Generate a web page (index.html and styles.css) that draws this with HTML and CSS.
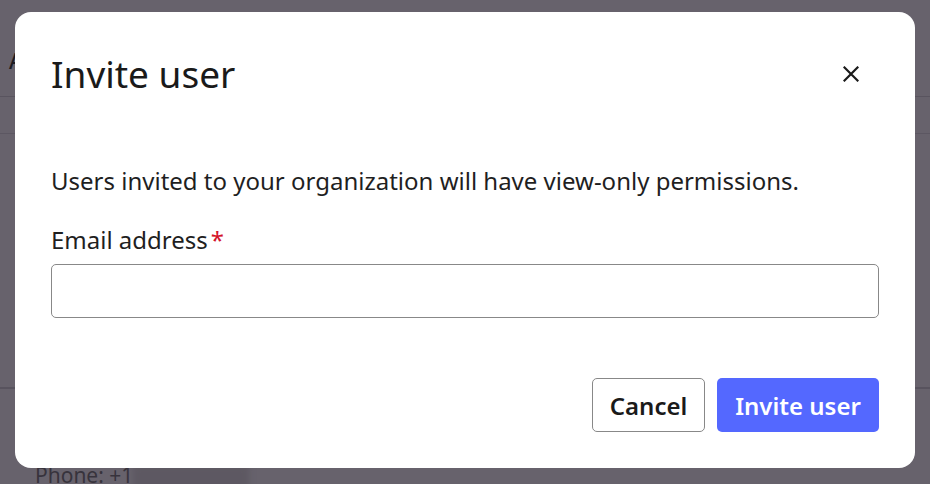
FILE: index.html
```html
<!DOCTYPE html>
<html lang="en">
<head>
<meta charset="utf-8">
<title>Invite user</title>
<link rel="stylesheet" href="styles.css">
</head>
<body>
<div class="page">
  <header class="page-header"><span class="page-title">Account</span></header>
  <nav class="page-tabs"></nav>
  <section class="page-content">
    <div class="page-card"></div>
    <div class="page-info">
      <span class="phone">Phone: +1</span><span class="phone-blur"></span>
    </div>
  </section>
</div>

<div class="modal" role="dialog" aria-labelledby="modal-title">
  <div class="modal-header">
    <h2 id="modal-title" class="modal-title">Invite user</h2>
    <button class="close-btn" aria-label="Close">
      <svg width="16" height="16" viewBox="0 0 16 16" aria-hidden="true"><path d="M1.5 1.5 L14.5 14.5 M14.5 1.5 L1.5 14.5" stroke="#1a1a1a" stroke-width="2.2" stroke-linecap="square" fill="none"/></svg>
    </button>
  </div>
  <p class="modal-text">Users invited to your organization will have view-only permissions.</p>
  <label class="field-label" for="email">Email address<span class="req">*</span></label>
  <input id="email" class="field-input" type="email">
  <div class="modal-actions">
    <button class="btn btn-secondary">Cancel</button>
    <button class="btn btn-primary">Invite user</button>
  </div>
</div>
</body>
</html>
```
FILE: styles.css
```css
* { box-sizing: border-box; }
html, body { margin: 0; padding: 0; }
body {
  width: 930px;
  height: 484px;
  overflow: hidden;
  background: #67626c;
  font-family: "Noto Sans", "Open Sans", sans-serif;
  position: relative;
}
.page { height: 484px; overflow: hidden; display: flex; flex-direction: column; }
.page > * { flex-shrink: 0; }
.page-header {
  height: 97px;
  border-bottom: 1px solid #59545f;
  padding: 47px 0 0 9px;
}
.page-title { font-size: 21px; color: #1c1a20; font-weight: 500; }
.page-tabs { height: 37px; border-bottom: 1px solid #5c5762; }
.page-content { display: flex; flex-direction: column; }
.page-card { height: 255px; flex-shrink: 0; border-bottom: 2px solid #58535e; }
.page-info { display: flex; align-items: flex-start; padding: 72px 0 0 35px; }
.phone { font-size: 21px; color: #37333c; }
.phone-blur { width: 116px; height: 26px; margin-top: 4px; background: #5d5862; filter: blur(3px); }

.modal {
  position: absolute;
  left: 15px;
  top: 12px;
  width: 900px;
  height: 456px;
  background: #fff;
  border-radius: 16px;
  padding: 36px;
  display: flex;
  flex-direction: column;
}
.modal-header {
  display: flex;
  justify-content: space-between;
  align-items: center;
  height: 52px;
}
.modal-title {
  margin: 0;
  font-size: 37px;
  font-weight: 400;
  color: #1a1a1a;
  line-height: 52px;
}
.close-btn {
  border: 0;
  background: none;
  padding: 0;
  width: 16px;
  height: 16px;
  margin-right: 20px;
  display: flex;
}
.modal-text {
  margin: 65px 0 0;
  font-size: 24px;
  line-height: 32px;
  color: #1f1f1f;
}
.field-label {
  margin-top: 27px;
  font-size: 24px;
  line-height: 32px;
  color: #1f1f1f;
}
.req { color: #d4142a; margin-left: 3px; }
.field-input {
  margin-top: 8px;
  height: 54px;
  width: 100%;
  border: 1.5px solid #888;
  border-radius: 5px;
  font-family: inherit;
  font-size: 24px;
}
.modal-actions {
  margin-top: auto;
  display: flex;
  justify-content: flex-end;
  gap: 12px;
}
.btn {
  height: 54px;
  border-radius: 5px;
  font-family: inherit;
  font-size: 24px;
  font-weight: 600;
  padding: 0;
}
.btn-secondary { background: #fff; border: 1.5px solid #888; color: #1a1a1a; width: 113px; }
.btn-primary { background: #5468ff; border: 0; color: #fff; width: 162px; }
```
